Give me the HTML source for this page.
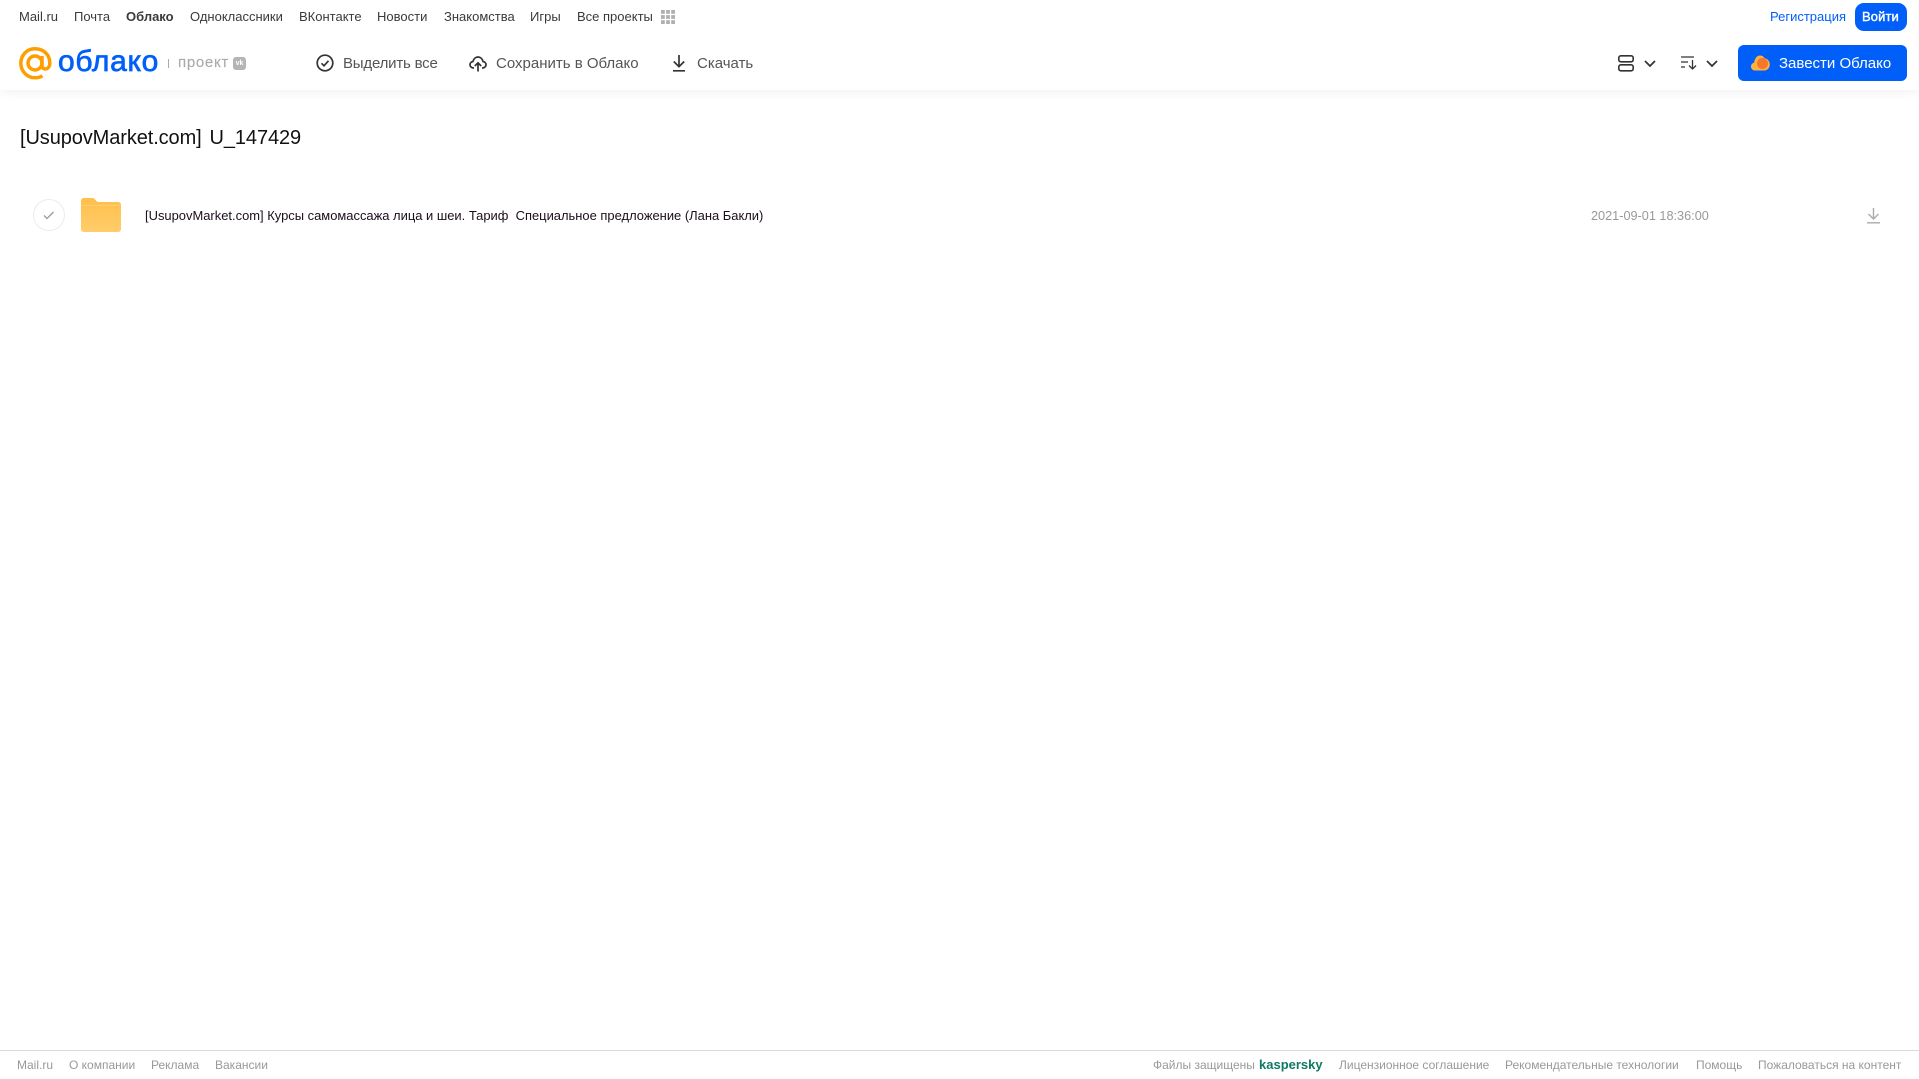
<!DOCTYPE html>
<html lang="ru"><head><meta charset="utf-8"><title>Облако</title>
<style>
html,body{margin:0;padding:0;background:#fff}
#p{position:relative;width:1919px;height:1079px;overflow:hidden;font-family:"Liberation Sans",sans-serif;background:#fff}
#p a,#p span.t{position:absolute;white-space:pre;text-decoration:none;line-height:16px}
.n{top:9px;font-size:13px;color:#3a3a3a}
.b{top:56px;font-size:15px;color:#555;line-height:16px}
.f{top:1057px;font-size:12px;color:#999}
svg{position:absolute;display:block;overflow:visible}
#hd{position:absolute;left:0;top:0;width:1919px;height:90px;background:#fff;box-shadow:0 2px 10px rgba(0,0,0,.06)}
</style></head><body><div id="p">
<div id="hd"></div>
<a class="n" style="left:19px">Mail.ru</a>
<a class="n" style="left:74px">Почта</a>
<a class="n" style="left:126px;font-weight:bold">Облако</a>
<a class="n" style="left:190px">Одноклассники</a>
<a class="n" style="left:299px">ВКонтакте</a>
<a class="n" style="left:377px">Новости</a>
<a class="n" style="left:444px">Знакомства</a>
<a class="n" style="left:530px">Игры</a>
<a class="n" style="left:577px">Все проекты</a>
<svg style="left:661px;top:10px" width="14" height="14" fill="#b0b0b0"><rect x="0" y="0" width="3.800" height="3.800"/><rect x="5.100" y="0" width="3.800" height="3.800"/><rect x="10.200" y="0" width="3.800" height="3.800"/><rect x="0" y="5.100" width="3.800" height="3.800"/><rect x="5.100" y="5.100" width="3.800" height="3.800"/><rect x="10.200" y="5.100" width="3.800" height="3.800"/><rect x="0" y="10.200" width="3.800" height="3.800"/><rect x="5.100" y="10.200" width="3.800" height="3.800"/><rect x="10.200" y="10.200" width="3.800" height="3.800"/></svg>
<a class="n" style="left:1770px;color:#005ff9;font-size:13px">Регистрация</a>
<div style="position:absolute;left:1855px;top:3px;width:52px;height:28px;border-radius:9px;background:#005ff9"></div>
<a class="n" style="left:1862px;color:#fff;font-size:13px;-webkit-text-stroke:.4px #fff;letter-spacing:.1px">Войти</a>

<!-- logo -->
<svg style="left:19px;top:47px" width="33" height="33" viewBox="0 0 33 33" fill="none" stroke="#ff9e00" stroke-width="3.500"><circle cx="16" cy="16" r="7"/><path d="M23 9v9.500c0 5 7.800 5 7.800-2.500C30.800 7.500 24.300 1.800 16 1.800S1.800 8.300 1.800 16.300 8.300 30.800 16 30.800c3 0 5.500-.7 7.500-2"/></svg>
<span class="t" style="left:58px;top:46px;font-size:30px;line-height:32px;color:#005ff9;-webkit-text-stroke:.7px #005ff9;letter-spacing:.7px">облако</span>
<div style="position:absolute;left:168px;top:59px;width:1px;height:9px;background:#aaa"></div>
<span class="t" style="left:178px;top:55px;font-size:15px;color:#aaa;-webkit-text-stroke:.15px #aaa;letter-spacing:.7px">проект</span>
<div style="position:absolute;left:233px;top:57px;width:13px;height:13px;border-radius:3px;background:#b5b5b5;color:#fff;font-size:7px;line-height:13px;text-align:center;font-weight:bold">vk</div>

<!-- actions -->
<svg style="left:316px;top:54px" width="18" height="18" viewBox="0 0 18 18" fill="none" stroke="#333" stroke-width="1.700"><circle cx="9" cy="9" r="7.800"/><path d="M5.500 9.300l2.500 2.500 4.500-5"/></svg>
<a class="b" style="left:343px;letter-spacing:-.2px">Выделить все</a>
<svg style="left:469px;top:55px" width="18" height="17" viewBox="0 0 18 17" fill="none" stroke="#333" stroke-width="1.700"><path d="M5 13H4.500C2.500 13 1 11.500 1 9.700c0-1.700 1.300-3 3-3.200C4.600 3.800 6.600 2 9 2s4.400 1.800 5 4.500c1.700.2 3 1.500 3 3.200 0 1.800-1.500 3.300-3.500 3.300H13"/><path d="M9 16.500V8M5.800 11L9 7.800l3.200 3.200"/></svg>
<a class="b" style="left:496px">Сохранить в Облако</a>
<svg style="left:672px;top:54px" width="14" height="18" viewBox="0 0 14 18" fill="none" stroke="#333" stroke-width="1.700"><path d="M7 1v11.500M1.800 7.500L7 12.700l5.200-5.200M1 16.800h12"/></svg>
<a class="b" style="left:697px">Скачать</a>

<!-- view controls -->
<svg style="left:1618px;top:55px" width="16" height="17" viewBox="0 0 16 17" fill="none" stroke="#333" stroke-width="1.600"><rect x=".8" y=".8" width="14.400" height="6" rx="2"/><rect x=".8" y="9.800" width="14.400" height="6" rx="2"/></svg>
<svg style="left:1644px;top:60px" width="12" height="7" viewBox="0 0 12 7" fill="none" stroke="#333" stroke-width="1.700"><path d="M1 1l5 5 5-5"/></svg>
<svg style="left:1681px;top:56px" width="16" height="14" viewBox="0 0 16 14" fill="none" stroke="#333" stroke-width="1.300"><path d="M0 1h13M0 6h7M0 11h4M11.500 4v9M8 9.500l3.500 3.500L15 9.500"/></svg>
<svg style="left:1706px;top:60px" width="12" height="7" viewBox="0 0 12 7" fill="none" stroke="#333" stroke-width="1.700"><path d="M1 1l5 5 5-5"/></svg>

<div style="position:absolute;left:1738px;top:45px;width:169px;height:36px;border-radius:6px;background:#005ff9"></div>
<svg style="left:1751px;top:55px" width="19" height="16" viewBox="0 0 19 16"><path d="M4 15.500C1.800 15.500 0 13.800 0 11.500c0-2 1.400-3.500 3.200-3.900C3.600 3.500 6 .5 9 .5c2 0 3.700 1.100 4.600 2.800 2.900.2 5.200 3.200 5.200 6.200 0 3.400-2.500 6-5.500 6z" fill="#ffb13d"/><circle cx="11.500" cy="8.500" r="5.500" fill="#f4772a"/></svg>
<a class="b" style="left:1779px;color:#fff">Завести Облако</a>

<!-- title -->
<span class="t" style="left:20px;top:126px;font-size:20px;line-height:24px;color:#111;word-spacing:2.500px;letter-spacing:-.1px">[UsupovMarket.com] U_147429</span>

<!-- row -->
<div style="position:absolute;left:33px;top:199px;width:30px;height:30px;border:1px solid #ececec;border-radius:50%"></div>
<svg style="left:43px;top:211px" width="12" height="9" viewBox="0 0 12 9" fill="none" stroke="#999" stroke-width="1.300"><path d="M1 4.500l3 3L10.500 1"/></svg>
<svg style="left:81px;top:198px" width="40" height="34" viewBox="0 0 40 34"><defs><linearGradient id="g" x1="0" y1="0" x2="0" y2="1"><stop offset="0" stop-color="#ffbf4a"/><stop offset="1" stop-color="#ffcd6b"/></linearGradient></defs><path d="M3 0h8c2 0 3 1 4 2.500.6 1 1.500 1.500 3 1.500h19c1.800 0 3 1.200 3 3v24c0 1.800-1.200 3-3 3H3c-1.800 0-3-1.200-3-3V3C0 1.200 1.200 0 3 0z" fill="url(#g)"/><rect x="0" y="7" width="40" height="1" fill="#ffcd70"/></svg>
<span class="t" style="left:145px;top:208px;font-size:12.950px;color:#1a0f1a">[UsupovMarket.com] Курсы самомассажа лица и шеи. Тариф  Специальное предложение (Лана Бакли)</span>
<span class="t" style="left:1591px;top:208px;font-size:12.700px;color:#999">2021-09-01 18:36:00</span>
<svg style="left:1867px;top:207px" width="13" height="17" viewBox="0 0 13 17" fill="none" stroke="#aaa" stroke-width="1.400"><path d="M6.500 1v10.500M1.500 7l5 5 5-5M0 15.800h13"/></svg>

<!-- footer -->
<div style="position:absolute;left:0;top:1050px;width:1919px;height:1px;background:#d9d9d9"></div>
<a class="f" style="left:17px">Mail.ru</a>
<a class="f" style="left:69px">О компании</a>
<a class="f" style="left:151px">Реклама</a>
<a class="f" style="left:215px">Вакансии</a>
<a class="f" style="left:1153px">Файлы защищены</a>
<a class="f" style="left:1259px;color:#0f7a63;font-weight:bold;font-size:13px">kaspersky</a>
<a class="f" style="left:1339px">Лицензионное соглашение</a>
<a class="f" style="left:1505px">Рекомендательные технологии</a>
<a class="f" style="left:1696px">Помощь</a>
<a class="f" style="left:1758px">Пожаловаться на контент</a>
</div></body></html>
